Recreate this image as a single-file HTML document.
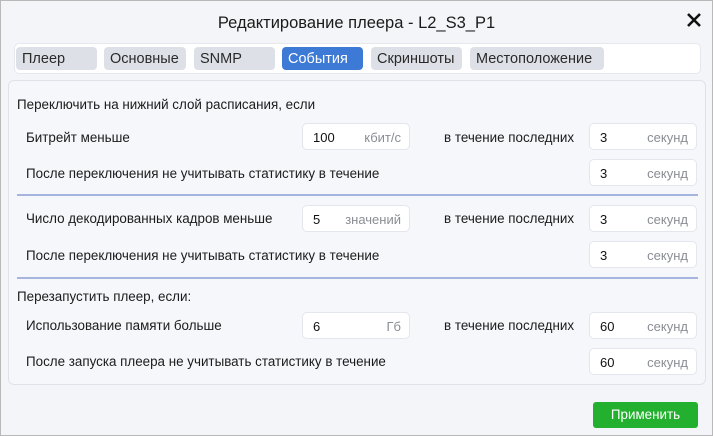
<!DOCTYPE html>
<html><head><meta charset="utf-8"><style>
*{margin:0;padding:0;box-sizing:border-box}
body{width:713px;height:436px;background:#f4f5f9;font-family:"Liberation Sans",sans-serif;font-size:13.4px;color:#1b1b1b;position:relative;overflow:hidden}
.frame{position:absolute;left:0;top:0;width:713px;height:436px;border:1px solid #b9b9b9;pointer-events:none}
.a{position:absolute;white-space:nowrap}
.tabs{left:14px;top:43px;width:687px;height:31px;background:#fff;border:1px solid #e6e8ee;border-radius:5px}
.tab{position:absolute;top:47px;height:23px;background:#dde1e7;border-radius:4px;padding:4px 0 0 6px;font-size:14.5px;color:#2a2a2a}
.panel{left:8px;top:80px;width:698px;height:305px;border:1px solid #dfe2e8;border-radius:6px;background:#f6f7fb}
.sep{position:absolute;left:17px;width:681px;height:2px;background:#a6b5dd}
.inp{position:absolute;height:27px;background:#fff;border:1px solid #e3e6ec;border-radius:5px;font-size:13px}
.inp .v{position:absolute;left:10px;top:6px;color:#111}
.inp .u{position:absolute;right:8px;top:6px;color:#8a8d94}
</style></head><body>
<div class="a" style="left:0;width:713px;text-align:center;top:14px;font-size:16.5px;color:#1b1b1b">Редактирование плеера - L2_S3_P1</div>
<svg class="a" style="left:686px;top:12px" width="16" height="16" viewBox="0 0 16 16"><path d="M2 2L14 14M14 2L2 14" stroke="#111" stroke-width="2.6"/></svg>
<div class="a tabs"></div>
<div class="tab" style="left:16px;width:81px">Плеер</div>
<div class="tab" style="left:104px;width:82px">Основные</div>
<div class="tab" style="left:194px;width:81px">SNMP</div>
<div class="tab" style="left:282px;width:81px;background:#3c7ad6;color:#fff">События</div>
<div class="tab" style="left:371px;width:91px">Скриншоты</div>
<div class="tab" style="left:470px;width:134px">Местоположение</div>
<div class="a panel"></div>
<div class="a" style="left:17px;top:97px">Переключить на нижний слой расписания, если</div>
<div class="a" style="left:26px;top:130px">Битрейт меньше</div>
<div class="a" style="left:444px;top:130px">в течение последних</div>
<div class="a" style="left:26px;top:166px">После переключения не учитывать статистику в течение</div>
<div class="sep" style="top:194px"></div>
<div class="a" style="left:26px;top:211px">Число декодированных кадров меньше</div>
<div class="a" style="left:444px;top:211px">в течение последних</div>
<div class="a" style="left:26px;top:248px">После переключения не учитывать статистику в течение</div>
<div class="sep" style="top:277px"></div>
<div class="a" style="left:17px;top:289px">Перезапустить плеер, если:</div>
<div class="a" style="left:26px;top:318px">Использование памяти больше</div>
<div class="a" style="left:444px;top:318px">в течение последних</div>
<div class="a" style="left:26px;top:354px">После запуска плеера не учитывать статистику в течение</div>

<div class="inp" style="left:302px;top:123px;width:108px"><span class="v">100</span><span class="u">кбит/с</span></div>
<div class="inp" style="left:589px;top:123px;width:108px"><span class="v">3</span><span class="u">секунд</span></div>
<div class="inp" style="left:589px;top:159px;width:108px"><span class="v">3</span><span class="u">секунд</span></div>
<div class="inp" style="left:302px;top:205px;width:108px"><span class="v">5</span><span class="u">значений</span></div>
<div class="inp" style="left:589px;top:205px;width:108px"><span class="v">3</span><span class="u">секунд</span></div>
<div class="inp" style="left:589px;top:241px;width:108px"><span class="v">3</span><span class="u">секунд</span></div>
<div class="inp" style="left:302px;top:312px;width:108px"><span class="v">6</span><span class="u">Гб</span></div>
<div class="inp" style="left:589px;top:312px;width:108px"><span class="v">60</span><span class="u">секунд</span></div>
<div class="inp" style="left:589px;top:348px;width:108px"><span class="v">60</span><span class="u">секунд</span></div>

<div class="a" style="left:593px;top:402px;width:105px;height:26px;background:#22b02e;border-radius:3px;color:#fff;text-align:center;line-height:26px;font-size:13.4px">Применить</div>
<div class="frame"></div>
</body></html>
